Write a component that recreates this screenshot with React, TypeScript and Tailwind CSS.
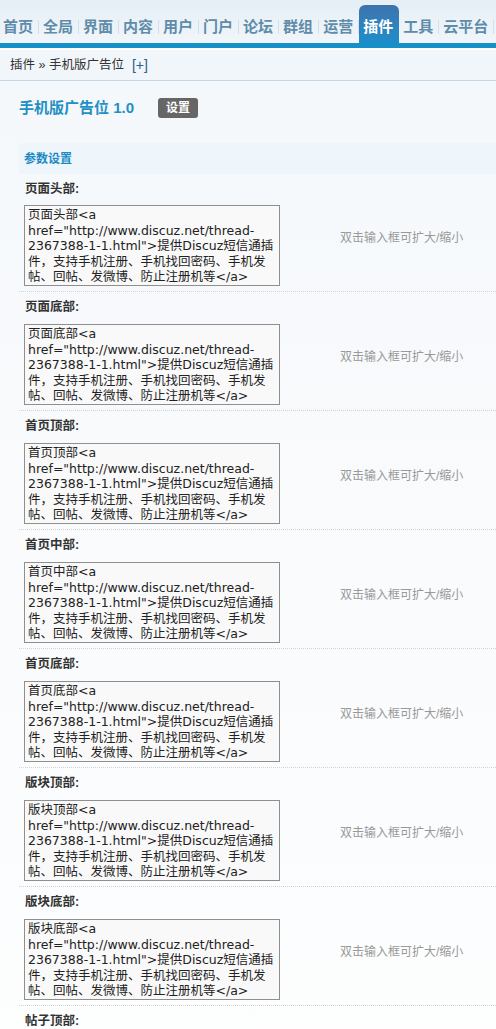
const tabs = ['首页', '全局', '界面', '内容', '用户', '门户', '论坛', '群组', '运营', '插件', '工具', '云平台']

const fields = ['页面头部', '页面底部', '首页顶部', '首页中部', '首页底部', '版块顶部', '版块底部', '帖子顶部', '帖子底部']

const cjk = { fontFamily: '"Liberation Sans", "Noto Sans CJK SC", sans-serif' }
const areaFont = { fontFamily: '"DejaVu Sans", "Noto Sans CJK SC", sans-serif' }

function NavBar() {
  return (
    <div className="bg-gradient-to-b from-[#e6eff6] to-[#f1f6fa]">
      <ul className="flex h-[43px] items-end -ml-px">
        {tabs.map((t) => {
          const active = t === '插件'
          return (
            <li
              key={t}
              className={
                active
                  ? 'flex h-[38px] items-end rounded-t-[6px] bg-gradient-to-b from-[#3b74ad] to-[#1c8dcb] pl-[4px] pr-[6px] pb-[9px]'
                  : 'flex h-[38px] items-end pl-[4px] pb-[9px]'
              }
            >
              <span
                className={
                  active
                    ? 'text-[15px] font-bold leading-[15px] text-white'
                    : 'text-[15px] font-bold leading-[15px] text-[#5f8ca9]'
                }
              >
                {t}
              </span>
              {!active && <span className="ml-[5px] h-[14px] w-px bg-[#d2e0ea]" />}
            </li>
          )
        })}
      </ul>
      <div className="h-[5px] bg-[#1591c7]" />
    </div>
  )
}

function Crumbs() {
  return (
    <div className="border-b border-[#c5d7e4] bg-white pt-[2px]">
      <div className="flex h-[30px] items-center bg-[#f1f6fa] pl-[10px] text-[12.5px] text-[#333]">
        插件 » 手机版广告位
        <span className="ml-[8px] text-[14px] text-[#2a5e8a]">[+]</span>
      </div>
    </div>
  )
}

function FakeTextarea({ label }: { label: string }) {
  const lines = [
    `${label}<a`,
    'href="http://www.discuz.net/thread-',
    '2367388-1-1.html">提供Discuz短信通插',
    '件，支持手机注册、手机找回密码、手机发',
    '帖、回帖、发微博、防止注册机等</a>',
  ]
  return (
    <div
      className="h-[81px] w-[256px] overflow-hidden border border-[#8f8f8f] bg-[#f9f9f9] px-[3px] py-[1px] text-[12.5px] leading-[15.5px] text-[#222]"
      style={areaFont}
    >
      {lines.map((l, i) => (
        <div key={i} className="whitespace-nowrap">
          {l}
        </div>
      ))}
    </div>
  )
}

function FieldRow({ label, first }: { label: string; first: boolean }) {
  return (
    <div className={first ? 'pb-[5px]' : 'border-t border-dotted border-[#d4d4d4] pb-[5px]'}>
      <div className={first ? 'flex h-[30px] items-center pl-[6px]' : 'flex h-[30px] items-center pl-[6px] pt-[1px]'}>
        <span className="text-[12.5px] font-bold text-[#333]">{label}:</span>
      </div>
      <div className={first ? 'mt-[1px] flex pl-[5px]' : 'mt-[2px] flex pl-[5px]'}>
        <FakeTextarea label={label} />
        <div className="ml-[60px] pt-[26px] text-[12px] leading-[14px] text-[#999]">双击输入框可扩大/缩小</div>
      </div>
    </div>
  )
}

export default function App() {
  return (
    <div className="min-h-screen bg-white" style={cjk}>
      <NavBar />
      <Crumbs />
      <div className="bg-gradient-to-b from-[#f5f8fb] to-white pt-[17px] pl-[19px]">
        <div className="flex items-center">
          <h3 className="text-[15px] font-bold leading-[20px] text-[#2290c5]">手机版广告位 1.0</h3>
          <span className="ml-[24px] rounded-[3px] bg-[#666] px-[8px] text-[12px] font-bold leading-[20px] text-white">
            设置
          </span>
        </div>
        <div className="mt-[25px] flex h-[31px] items-center bg-[#eef5fb] pl-[5px] text-[12px] font-bold text-[#1c8ac3]">
          参数设置
        </div>
        {fields.map((f, i) => (
          <FieldRow key={f} label={f} first={i === 0} />
        ))}
      </div>
    </div>
  )
}
